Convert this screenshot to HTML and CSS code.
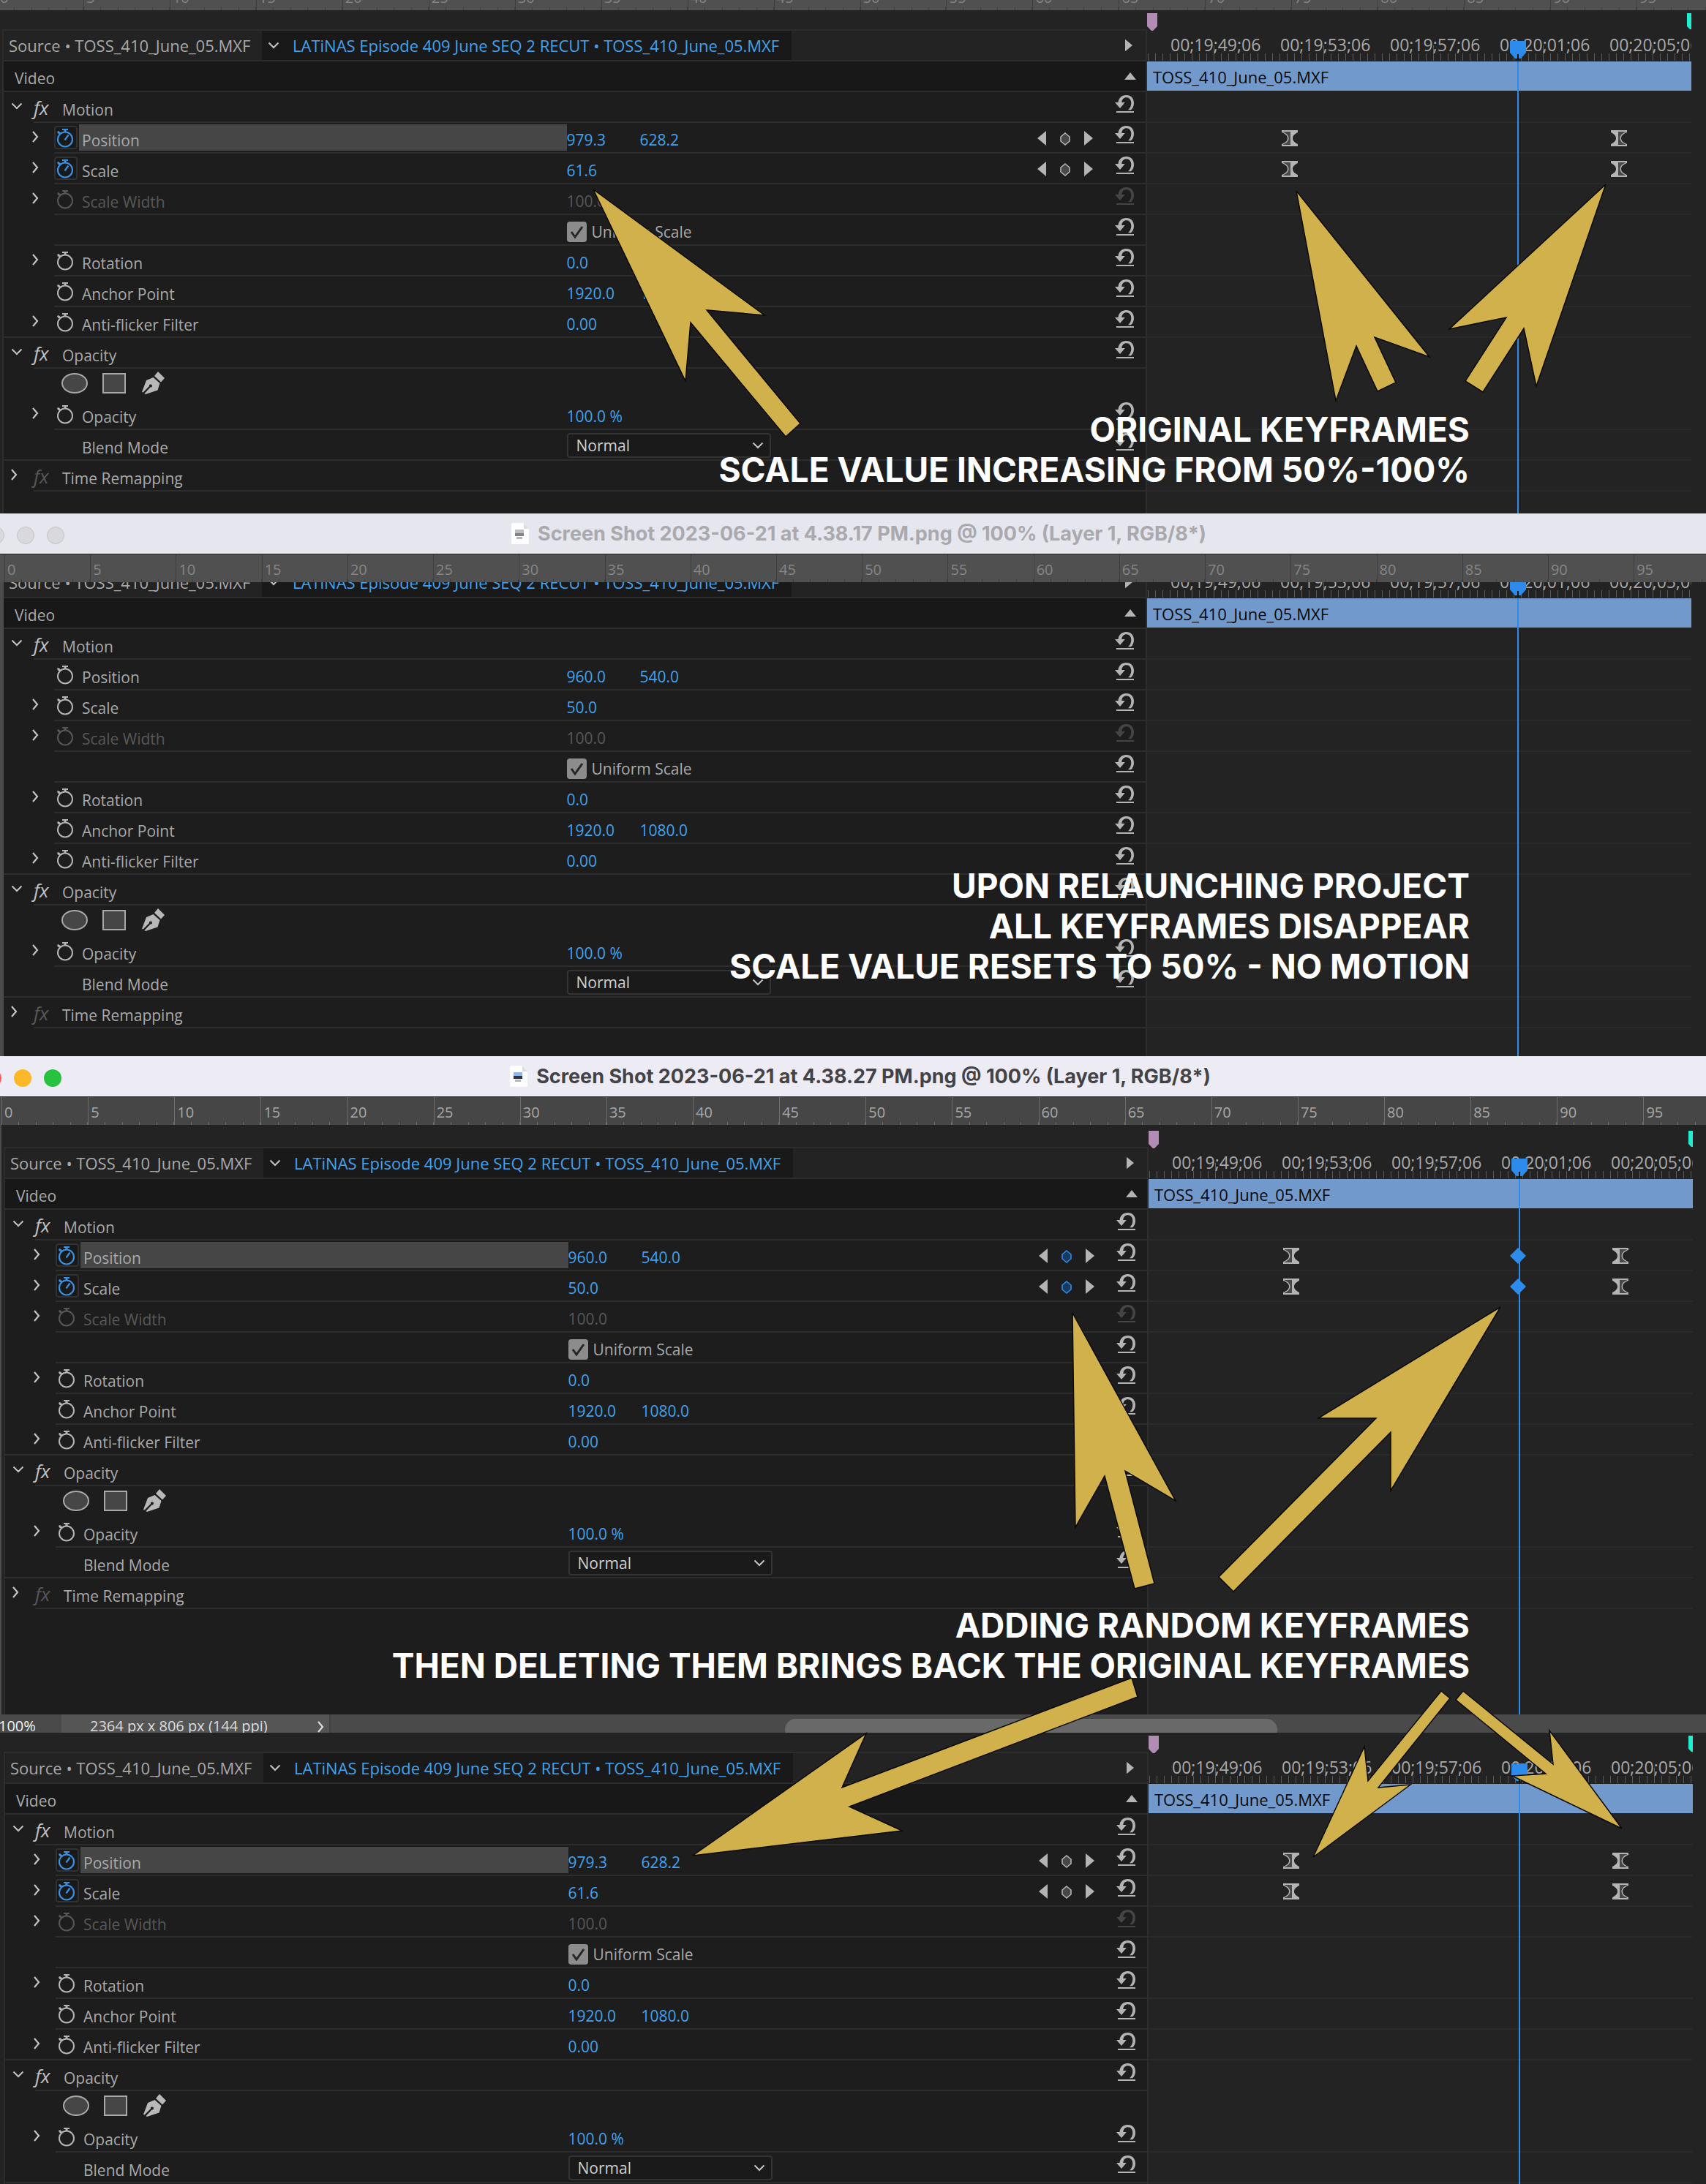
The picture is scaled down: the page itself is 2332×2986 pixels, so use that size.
FILE: index.html
```html
<!DOCTYPE html>
<html lang="en">
<head>
<meta charset="utf-8">
<meta name="viewport" content="width=device-width, initial-scale=1">
<title>Effect Controls keyframe report</title>
<link rel="stylesheet" href="styles.css">
</head>
<body>
<svg class="sprite" aria-hidden="true">
  <symbol id="down" viewBox="0 0 16 16"><path d="M1.500 4.500 8 11l6.500-6.500" fill="none" stroke="currentColor" stroke-width="2"/></symbol>
  <symbol id="right" viewBox="0 0 16 16"><path d="M1 1l6 7-6 7" fill="none" stroke="currentColor" stroke-width="2.200"/></symbol>
  <symbol id="watch" viewBox="0 0 32 32"><circle cx="15" cy="18.500" r="10" fill="none" stroke="currentColor" stroke-width="2"/><path d="M11 4h8v2h-2.500v3h-3V6H11zM4 8l2-1 3 2.500-1.500 2L5 10.500z" fill="currentColor"/></symbol>
  <symbol id="watch-on" viewBox="0 0 32 32"><circle cx="15" cy="18.500" r="10" fill="none" stroke="currentColor" stroke-width="2.200"/><path d="M11 4h8v2h-2.500v3h-3V6H11zM4 8l2-1 3 2.500-1.500 2L5 10.500z" fill="currentColor"/><path d="M14.500 19.500l5-7" stroke="currentColor" stroke-width="2.200"/></symbol>
  <symbol id="reset" viewBox="0 0 26 24"><path d="M0 10h4.500C5 4 9.500 0 15.500 0 22 0 26 4.500 26 11c0 4-1.500 7-4 9.300h-4c3-2.800 4.300-5.800 4.300-9.300 0-4.500-2.600-7.700-6.500-7.700-3.600 0-6.300 2.700-6.500 6.700h4.500L7 18z" fill="currentColor"/><path d="M2 22h24v2H2z" fill="currentColor"/></symbol>
  <symbol id="prev" viewBox="0 0 12 20"><path d="M12 0v20L0 10z" fill="currentColor"/></symbol>
  <symbol id="next" viewBox="0 0 12 20"><path d="M0 0v20l12-10z" fill="currentColor"/></symbol>
  <symbol id="up" viewBox="0 0 16 10"><path d="M8 0l8 10H0z" fill="currentColor"/></symbol>
  <symbol id="key" viewBox="0 0 14 18"><path d="M7 1l6 5v6l-6 5-6-5V6z" fill="var(--key-fill)" stroke="currentColor" stroke-width="1.600"/></symbol>
  <symbol id="ease-in" viewBox="0 0 22 22"><path d="M0 0h22v3c-3 1.500-7 4-7 8s4 6.500 7 8v3H0v-3c4-1.500 8-4 8-8S4 4.500 0 3z" fill="#b4b4b4"/><path d="M12 2v18H2v-.5c4-1.500 7.500-4.500 7.500-8.500S6 4 2 2.500V2z" fill="#484848"/></symbol>
  <symbol id="ease-out" viewBox="0 0 22 22"><path d="M22 0H0v3c3 1.500 7 4 7 8s-4 6.500-7 8v3h22v-3c-4-1.500-8-4-8-8s4-6.500 8-8z" fill="#b4b4b4"/><path d="M10 2v18h10v-.5c-4-1.500-7.500-4.500-7.500-8.500S16 4 20 2.500V2z" fill="#484848"/></symbol>
  <symbol id="diamond" viewBox="0 0 22 22"><path d="M11 0l11 11-11 11L0 11z" fill="#2d8ceb"/></symbol>
  <symbol id="pen" viewBox="0 0 32 32"><path d="M22 0l9 9-5 5.500L17 6z" fill="currentColor"/><path d="M15.500 8l9 8-3 9.500L5 31l-1.500-1 8-8.500a2 2 0 1 0-1.500-1.500L1.500 28.500 0 28 6 12z" fill="currentColor"/></symbol>
  <symbol id="doc" viewBox="0 0 24 30"><path d="M0 2q0-2 2-2h15l7 8v20q0 1-2 1H2q-2 0-2-1z" fill="#fdfdfe"/><path d="M17 0l7 8h-7z" fill="#dcdce2"/><path d="M5 9h12v9H5z" fill="var(--sky)"/><path d="M5 14h12v4H5z" fill="var(--sea)"/><path d="M7 19h8v3H7z" fill="#b5b5ba"/></symbol>
</svg>

<main class="page">
  <section class="shot">
    <div class="ruler ruler-cut" data-ruler></div>
    <div class="panel panel-first" data-panel="original"></div>
    <p class="callout callout-first">ORIGINAL KEYFRAMES<br>SCALE VALUE INCREASING FROM 50%-100%</p>
  </section>

  <section class="shot">
    <header class="titlebar titlebar-idle">
      <span class="lights"><i></i><i></i><i></i></span>
      <svg class="doc"><use href="#doc"/></svg>
      <h2>Screen Shot 2023-06-21 at 4.38.17 PM.png @ 100% (Layer 1, RGB/8*)</h2>
    </header>
    <div class="ruler ruler-idle" data-ruler></div>
    <div class="panel panel-second" data-panel="relaunched"></div>
    <p class="callout callout-second">UPON RELAUNCHING PROJECT<br>ALL KEYFRAMES DISAPPEAR<br>SCALE VALUE RESETS TO 50% - NO MOTION</p>
  </section>

  <section class="shot">
    <header class="titlebar titlebar-active">
      <span class="lights"><i></i><i></i><i></i></span>
      <svg class="doc"><use href="#doc"/></svg>
      <h2>Screen Shot 2023-06-21 at 4.38.27 PM.png @ 100% (Layer 1, RGB/8*)</h2>
    </header>
    <div class="ruler ruler-active" data-ruler></div>
    <div class="panel panel-third" data-panel="added"></div>
    <footer class="status">
      <span class="zoom">100%</span>
      <button class="docinfo" type="button">2364 px x 806 px (144 ppi)<svg class="i16"><use href="#right"/></svg></button>
      <span class="track"><span class="thumb"></span></span>
    </footer>
    <p class="callout callout-third">ADDING RANDOM KEYFRAMES<br>THEN DELETING THEM BRINGS BACK THE ORIGINAL KEYFRAMES</p>
  </section>

  <section class="shot">
    <div class="panel panel-fourth" data-panel="restored"></div>
  </section>

  <svg class="arrows" viewBox="0 0 2332 2986" preserveAspectRatio="none" aria-hidden="true">
    <path d="M811 259 1045 431 966 424 1094 579 1074 597 944 441 937 521z"/>
    <path d="M1772 261 1954 488 1879 461 1908 523 1883 535 1854 473 1826 548z"/>
    <path d="M2195 252 1981 450 2059 434 2003 521 2027 536 2083 449 2100 528z"/>
    <path d="M1466 1795 1607 2052 1538 2011 1578 2165 1551 2172 1510 2018 1470 2088z"/>
    <path d="M2051 1787 1802 1939 1881 1939 1666 2156 1686 2176 1901 1958 1901 2038z"/>
    <path d="M947 2537 1184 2370 1151 2444 1547 2294 1555 2320 1161 2470 1233 2503z"/>
    <path d="M1795 2539 1865 2388 1870 2435 1970 2312 1982 2322 1884 2444 1928 2440z"/>
    <path d="M2217 2500 2118 2366 2123 2412 2000 2312 1990 2324 2113 2425 2067 2428z"/>
  </svg>
</main>
<script src="panels.js"></script>
</body>
</html>
```

FILE: styles.css
```css
* { box-sizing: border-box; }

:root {
  --text: #a9a9a9;
  --dim: #575757;
  --blue: #42a2ee;
  --line: #2d2d2d;
  --icon: #b4b4b4;
}

body {
  margin: 0;
  background: #232323;
  color: var(--text);
  font: 21px/40px "Open Sans", "Noto Sans", sans-serif;
}

button, select {
  margin: 0;
  padding: 0;
  border: 0;
  background: none;
  color: inherit;
  font: inherit;
}

h2, p { margin: 0; }
svg { display: block; flex: none; }
.sprite { position: absolute; width: 0; height: 0; }
.i16 { width: 16px; height: 16px; }

.page { position: relative; overflow: hidden; }
.shot { position: relative; }

/* Document rulers */
.ruler {
  display: flex;
  height: 38px;
  overflow: hidden;
  padding-left: 2px;
  background: #505050;
  color: #858585;
  --tick: #3e3e3e;
  font-size: 20px;
  line-height: 42px;
}
.ruler span {
  flex: 0 0 var(--step);
  padding-left: 3px;
  border-left: 1px solid var(--tick);
  background: repeating-linear-gradient(to right, transparent 0 calc(20% - 1px), var(--tick) calc(20% - 1px) 20%) left bottom / 100% 4px no-repeat;
}
.ruler-cut { --step: 5.05%; height: 14px; align-items: flex-end; margin-left: -4px; padding: 0; }
.ruler-cut span { height: 38px; }
.ruler-idle { --step: 5.04%; padding-left: 6px; }
.ruler-active { --step: 5.07%; --tick: #6c6c6c; background: #464646; color: #a6a6a6; }

/* Window title bars */
.titlebar {
  position: relative;
  display: flex;
  align-items: center;
  justify-content: center;
  gap: 12px;
  height: 56px;
  padding-left: 16px;
  border-bottom: 1px solid #222;
}
.titlebar h2 { font: 700 27px/50px Inter, sans-serif; white-space: nowrap; }
.titlebar-idle { background: #e6e6ef; color: #a9a9ae; --sky: #bbbbc0; --sea: #808085; }
.titlebar-active { padding-left: 20px; background: #edecf5; color: #434347; --sky: #8fb4e8; --sea: #2c3440; }
.doc { width: 24px; height: 30px; }
.lights { position: absolute; left: -18px; top: 18px; display: flex; gap: 17px; }
.lights i { width: 24px; height: 24px; border: 1px solid #c3c3c8; border-radius: 50%; background: #d8d8dd; }
.titlebar-active .lights { left: -22px; }
.titlebar-active i { border-color: transparent; }
.titlebar-active i:nth-child(1) { background: #fc5b57; }
.titlebar-active i:nth-child(2) { background: #fdb827; }
.titlebar-active i:nth-child(3) { background: #27c33f; }

/* Effect Controls panel */
.panel {
  display: grid;
  grid-template-columns: 1fr 744px;
  overflow: hidden;
  padding: 0 20px 0 3px;
  background: #232323;
}
.panel-first { --top: 26px; --bottom: 30px; }
.panel-second { --top: -22px; --bottom: 38px; padding-left: 0; border-left: 3px solid #4c4c4c; }
.panel-third { --top: 30px; --bottom: 144px; padding-right: 18px; border-left: 2px solid #4c4c4c; }
.panel-fourth { --top: 26px; --bottom: 1px; padding: 0 18px 0 5px; }

.controls {
  min-width: 0;
  margin-top: var(--top);
  padding-bottom: var(--bottom);
  border: solid var(--line);
  border-width: 2px 2px 0;
  background: #1d1d1d;
}
.panel-second .controls { border-left-color: #4c4c4c; }
.tabs {
  display: flex;
  height: 42px;
  border-bottom: 2px solid var(--line);
  background: #232323;
  font-size: 22px;
  white-space: nowrap;
}
.tabs button { display: flex; align-items: center; height: 40px; }
.tabs .tab-source { width: 353px; padding-left: 7px; }
.tabs .tab-clip { width: 724px; padding-left: 8px; gap: 18px; background: #191919; color: var(--blue); }
.tab-clip svg { color: #c4c4c4; }
.tabs .play { margin-left: auto; padding-right: 18px; color: var(--icon); }
.play svg { width: 10px; height: 18px; }
.video {
  display: flex;
  align-items: center;
  justify-content: space-between;
  height: 42px;
  padding: 0 13px 0 15px;
  border-bottom: 2px solid var(--line);
  background: #181818;
}
.video span { padding-top: 6px; }
.video svg { width: 16px; height: 10px; color: var(--icon); }

.row {
  display: grid;
  grid-template-columns: 49.3% 1fr auto;
  height: 42px;
  background: linear-gradient(var(--line), var(--line)) 69px bottom / 100% 2px no-repeat;
}
.row.group { background-position-x: 41px; }
.row.full { background-position-x: 0; }
.row.bare { background: none; }
.name { display: flex; height: 42px; padding-left: 39px; }
.group .name { padding-left: 10px; }
.twirl { width: 16px; height: 16px; margin-top: 11px; margin-right: 14px; color: #c4c4c4; }
.watch { width: 32px; height: 32px; margin: 4px 2px 0 0; border-radius: 4px; color: var(--icon); }
.watch svg { width: 32px; height: 32px; }
.watch.on { background: #191919; box-shadow: inset 0 0 0 2px #313131; color: #3a8fe0; }
.watch.none { visibility: hidden; }
.label { flex: 1; height: 36px; margin-top: 2px; padding: 2px 0 0 4px; }
.label.selected { background: #464646; }
.fx { width: 21px; margin: 0 18px 0 1px; color: #c0c0c0; font-size: 26px; font-style: italic; line-height: 42px; }
.fx.off { color: var(--dim); }
.group .label { padding-left: 0; }

.values { display: flex; padding-top: 3px; color: var(--blue); }
.values button { width: 100px; text-align: left; white-space: nowrap; }
.disabled, .disabled .watch, .disabled .values, .disabled .reset { color: var(--dim); }
.check { display: flex; align-items: center; gap: 7px; color: var(--text); cursor: pointer; }
.check .box { position: relative; display: flex; }
.check input {
  appearance: none;
  width: 27px;
  height: 28px;
  margin: 0;
  border-radius: 4px;
  background: #8c8c8c;
}
.check .box svg { position: absolute; left: 0; top: 0; width: 27px; height: 28px; visibility: hidden; }
.check input:checked + svg { visibility: visible; }
.drop { position: relative; display: block; width: 279px; height: 34px; margin-top: 1px; }
.drop select {
  appearance: none;
  display: block;
  width: 100%;
  height: 34px;
  padding: 0 11px;
  border: 2px solid #333;
  border-radius: 4px;
  background: #1a1a1a;
  color: #d0d0d0;
  line-height: 30px;
}
.drop svg { position: absolute; right: 10px; top: 9px; color: #c4c4c4; }

.tools { display: flex; padding-right: 16px; }
.nav { display: flex; gap: 19px; padding: 11px 30px 0 0; color: var(--icon); --key-fill: #484848; }
.nav button { display: block; height: 20px; }
.nav svg { width: 12px; height: 20px; }
.nav .add svg { width: 14px; height: 18px; margin-top: 1px; }
.nav .add.lit { color: #2d8ceb; --key-fill: #173a5e; }
.reset { height: 24px; margin-top: 4px; color: var(--icon); }
.reset svg { width: 26px; height: 24px; }
.disabled .reset { color: #454545; }

.masks { display: flex; gap: 20px; padding: 6px 0 0 79px; }
.masks button { height: 28px; border: 2px solid #a8a8a8; background: #464646; }
.masks .ellipse { width: 36px; border-radius: 50%; }
.masks .rect { width: 32px; }
.masks .pen { width: 32px; height: 32px; margin: -2px 0 0 2px; border: 0; background: none; color: #b8b8b8; }
.pen svg { width: 32px; height: 32px; }

/* Keyframe timeline */
.timeline { position: relative; min-width: 0; margin-top: var(--top); }
.times {
  display: flex;
  height: 44px;
  padding-left: 32px;
  overflow: hidden;
  font-size: 23px;
  line-height: 42px;
  background:
    repeating-linear-gradient(to right, #5a5a5a 0 1px, transparent 1px 150px) 91px 22px / 100% 21px no-repeat,
    repeating-linear-gradient(to right, transparent 0 3px, #5a5a5a 3px 4px, transparent 4px 10px) -2px 33px / 746px 10px no-repeat;
}
.times span { flex: 0 0 150px; }
.clip {
  height: 40px;
  margin-bottom: 2px;
  padding: 1px 0 0 8px;
  overflow: hidden;
  background: #7199cb;
  color: #0a0a0a;
  font-size: 22px;
}
.lane { position: relative; height: 42px; border-bottom: 2px solid #2a2a2a; }
.lane.open { border-color: transparent; }
.lane svg { position: absolute; top: 10px; left: 184px; width: 22px; height: 22px; }
.lane svg.last { left: 634px; }
.lane svg.mid { left: 494px; }
.marker { position: absolute; top: -22px; width: 14px; height: 24px; }
.marker.in { left: 0; background: #b28db3; clip-path: polygon(0 0, 100% 0, 100% 75%, 58% 100%, 42% 100%, 0 75%); }
.marker.out { right: 0; width: 6px; background: #1ef0cf; clip-path: polygon(0 0, 100% 0, 100% 92%, 66% 92%, 0 75%); }
.playhead { position: absolute; top: 44px; bottom: 0; left: 506px; width: 2px; background: #2d8ceb; }
.playhead svg { position: absolute; top: -28px; left: -10px; width: 22px; height: 26px; }

/* Status bar */
.status { display: flex; height: 25px; overflow: hidden; background: #4a4a4a; color: #dcdcdc; font-size: 20px; line-height: 32px; }
.zoom { width: 86px; margin-left: -2px; color: #f2f2f2; }
.docinfo { display: flex; justify-content: space-between; width: 368px; padding: 0 0 0 39px; border-right: 2px solid #424242; background: #555; line-height: 32px; }
.docinfo svg { margin-top: 9px; }
.track { flex: 1; padding: 6px 586px 0 621px; }
.thumb { display: block; height: 30px; border-radius: 15px; background: #696969; }

/* Annotations */
.callout {
  position: absolute;
  right: 323px;
  z-index: 1;
  color: #fff;
  font: 700 46px/55px Inter, Arial, sans-serif;
  text-align: right;
  white-space: nowrap;
}
.callout-first { top: 560px; }
.callout-second { top: 482px; }
.callout-third { top: 751px; }
.arrows { position: absolute; inset: 0; width: 100%; height: 100%; pointer-events: none; }
.arrows path { fill: #d1b14b; stroke: #0c0a04; stroke-width: 1.5; }
```

FILE: panels.js
```js
// Builds the document rulers and the Effect Controls panels from their data.
const icon = (id, cls = '') => `<svg class="${cls}" aria-hidden="true"><use href="#${id}"/></svg>`;

document.querySelectorAll('[data-ruler]').forEach(ruler => {
  ruler.innerHTML = Array.from({ length: 20 }, (_, i) => `<span>${i * 5}</span>`).join('');
});

const states = {
  original: { position: ['979.3', '628.2'], scale: '61.6', keyed: true, remap: true },
  relaunched: { position: ['960.0', '540.0'], scale: '50.0', keyed: false, remap: true },
  added: { position: ['960.0', '540.0'], scale: '50.0', keyed: true, lit: true, remap: true },
  restored: { position: ['979.3', '628.2'], scale: '61.6', keyed: true, remap: false }
};

const reset = `<button class="reset" type="button" aria-label="Reset">${icon('reset')}</button>`;

function group(name, open = true) {
  return `<div class="row group"><div class="name">
    <button class="twirl" type="button" aria-label="Toggle ${name}">${icon(open ? 'down' : 'right', 'i16')}</button>
    <span class="fx${open ? '' : ' off'}">fx</span><span class="label">${name}</span></div>
    <div></div><div class="tools">${open ? reset : ''}</div></div>`;
}

function row({ name = '', values = [], body = '', cls = '', twirl = true, watch = 'watch', selected, nav = '' }) {
  const fields = values.map(v => `<button type="button" aria-label="${name} value">${v}</button>`).join('');
  return `<div class="row ${cls}"><div class="name">
    ${twirl ? `<button class="twirl" type="button" aria-label="Toggle ${name}">${icon('right', 'i16')}</button>` : '<span class="twirl"></span>'}
    ${watch ? `<button class="watch ${watch === 'watch-on' ? 'on' : ''}" type="button" aria-label="Animate ${name}">${icon(watch)}</button>` : '<span class="watch none"></span>'}
    <span class="label${selected ? ' selected' : ''}">${name}</span></div>
    <div class="values">${fields}${body}</div><div class="tools">${nav}${reset}</div></div>`;
}

function panel(id, s) {
  const watch = s.keyed ? 'watch-on' : 'watch';
  const nav = s.keyed ? `<div class="nav"><button type="button" aria-label="Previous keyframe">${icon('prev')}</button>
    <button class="add${s.lit ? ' lit' : ''}" type="button" aria-label="Add or remove keyframe">${icon('key')}</button>
    <button type="button" aria-label="Next keyframe">${icon('next')}</button></div>` : '';
  const uniform = `<label class="check"><span class="box"><input type="checkbox" checked><svg viewBox="0 0 27 28" aria-hidden="true"><path d="M6 14l5 7L21 7" fill="none" stroke="#262626" stroke-width="3"/></svg></span>Uniform Scale</label>`;
  const blend = `<span class="drop"><select aria-label="Blend Mode"><option>Normal</option></select>${icon('down', 'i16')}</span>`;
  const keys = icon('ease-in') + (s.lit ? icon('diamond', 'mid') : '') + icon('ease-out', 'last');
  const lanes = ['', 'key', 'key', '', 'open', '', '', '', 'open', 'open', '', '', ...(s.remap ? [''] : [])];

  return `<div class="controls">
    <div class="tabs">
      <button class="tab-source" type="button">Source • TOSS_410_June_05.MXF</button>
      <button class="tab-clip" type="button">${icon('down', 'i16')}LATiNAS Episode 409 June SEQ 2 RECUT • TOSS_410_June_05.MXF</button>
      <button class="play" type="button" aria-label="Show timeline">${icon('next')}</button>
    </div>
    <div class="video"><span>Video</span>${icon('up')}</div>
    ${group('Motion')}
    ${row({ name: 'Position', values: s.position, watch, nav, twirl: s.keyed, selected: s.keyed })}
    ${row({ name: 'Scale', values: [s.scale], watch, nav })}
    ${row({ name: 'Scale Width', values: ['100.0'], cls: 'disabled' })}
    ${row({ body: uniform, twirl: false, watch: '' })}
    ${row({ name: 'Rotation', values: ['0.0'] })}
    ${row({ name: 'Anchor Point', values: ['1920.0', '1080.0'], twirl: false })}
    ${row({ name: 'Anti-flicker Filter', values: ['0.00'], cls: 'full' })}
    ${group('Opacity')}
    <div class="row bare"><div class="masks">
      <button class="ellipse" type="button" aria-label="Ellipse mask"></button>
      <button class="rect" type="button" aria-label="Rectangle mask"></button>
      <button class="pen" type="button" aria-label="Free draw bezier">${icon('pen')}</button></div></div>
    ${row({ name: 'Opacity', values: ['100.0 %'] })}
    ${row({ name: 'Blend Mode', body: blend, twirl: false, watch: '', cls: 'full' })}
    ${s.remap ? group('Time Remapping', false) : ''}
  </div>
  <div class="timeline">
    <i class="marker in"></i><i class="marker out"></i>
    <div class="times">${['00;19;49;06', '00;19;53;06', '00;19;57;06', '00;20;01;06', '00;20;05;06'].map(t => `<span>${t}</span>`).join('')}</div>
    <div class="clip">TOSS_410_June_05.MXF</div>
    ${lanes.map(l => `<div class="lane ${l}">${l === 'key' && s.keyed ? keys : ''}</div>`).join('')}
    <div class="playhead"><svg viewBox="0 0 22 26" aria-hidden="true"><path d="M0 0h22v16l-7 8H7l-7-8z" fill="#2d8ceb"/><path d="M10 18h2v8h-2z" fill="#111"/></svg></div>
  </div>`;
}

document.querySelectorAll('[data-panel]').forEach(el => {
  el.innerHTML = panel(el.dataset.panel, states[el.dataset.panel]);
});
```
